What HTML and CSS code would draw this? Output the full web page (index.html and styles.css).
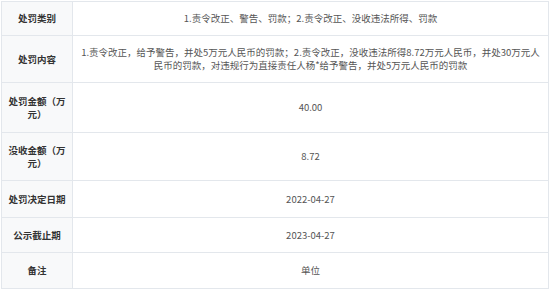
FILE: index.html
```html
<!DOCTYPE html>
<html lang="zh-CN">
<head>
<meta charset="utf-8">
<link rel="stylesheet" href="styles.css">
</head>
<body>
<table class="info">
  <tr><th>处罚类别</th><td>1.责令改正、警告、罚款；2.责令改正、没收违法所得、罚款</td></tr>
  <tr><th>处罚内容</th><td>1.责令改正，给予警告，并处5万元人民币的罚款；2.责令改正，没收违法所得8.72万元人民币，并处30万元人民币的罚款，对违规行为直接责任人杨*给予警告，并处5万元人民币的罚款</td></tr>
  <tr class="tall"><th>处罚金额（万元）</th><td>40.00</td></tr>
  <tr class="tall2"><th>没收金额（万元）</th><td>8.72</td></tr>
  <tr class="r5"><th>处罚决定日期</th><td>2022-04-27</td></tr>
  <tr class="r6"><th>公示截止期</th><td>2023-04-27</td></tr>
  <tr class="r7"><th>备注</th><td>单位</td></tr>
</table>
</body>
</html>
```
FILE: styles.css
```css
html, body {
  margin: 0;
  padding: 0;
  background: #ffffff;
}
body {
  padding: 1px 0 0 1px;
  font-family: "Noto Sans CJK SC", "Noto Sans", sans-serif;
  font-size: 9.5px;
  line-height: 13px;
}
.info {
  width: 548px;
  border-collapse: collapse;
  table-layout: fixed;
}
.info th, .info td {
  border: 1px solid #e3e7ec;
  text-align: center;
  vertical-align: middle;
  padding: 10px 5px;
}
.info th {
  width: 60px;
  background: #f8f9fa;
  color: #333;
  font-weight: 700;
}
.info td {
  color: #555;
  font-weight: 400;
  height: 13px;
}
.info tr.tall td { height: 29px; }
.info tr.tall2 td { height: 27px; }
.info tr.r5 td { height: 16px; }
.info tr.r6 td { height: 14px; }
.info tr.r7 td { height: 15px; }
```
